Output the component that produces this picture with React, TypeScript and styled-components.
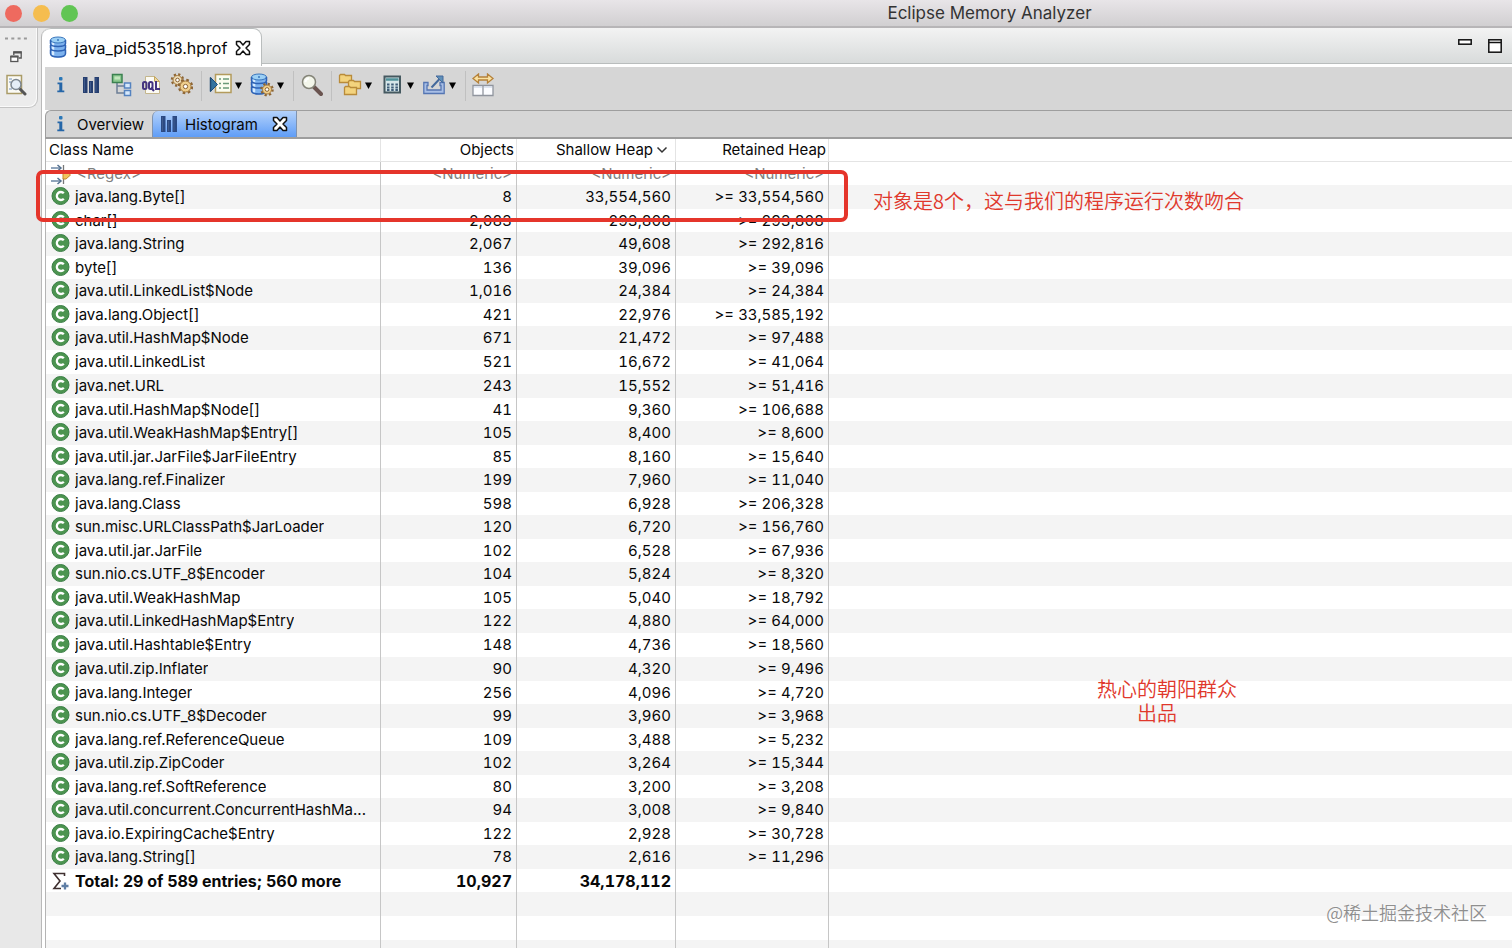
import React from "react";
import styled, { createGlobalStyle } from "styled-components";

const GlobalStyle = createGlobalStyle`
  * { box-sizing: border-box; }
  html, body, #root { height: 100%; margin: 0; }
  body {
    overflow: hidden;
    font-family: Inter, "Noto Sans CJK SC", sans-serif;
    font-size: 15px;
    color: #080808;
    background: #e8e8e8;
  }
  button {
    font: inherit;
    color: inherit;
    background: none;
    border: 0;
    padding: 0;
    margin: 0;
  }
  svg { display: block; flex: none; }
`;

const Window = styled.div`
  display: flex;
  flex-direction: column;
  height: 100vh;
`;

const TitleBar = styled.header`
  display: flex;
  align-items: center;
  height: 28px;
  flex: none;
  padding: 0 5px;
  background: linear-gradient(#e8e5e8, #d1cfd1);
  border-bottom: 2px solid #b7b5b7;
`;

const Lights = styled.div`
  display: flex;
  gap: 11px;
  width: 467px;
  flex: none;
`;

const Light = styled.button<{ $color: string }>`
  width: 17px;
  height: 17px;
  border-radius: 50%;
  background: ${(p) => p.$color};
`;

const Title = styled.h1`
  flex: 1;
  margin: 0;
  text-align: center;
  font-size: 17px;
  line-height: 26px;
  font-weight: 400;
  color: #333;
`;

const Workbench = styled.div`
  display: flex;
  flex: 1;
  min-height: 0;
`;

const SideStrip = styled.aside`
  width: 41px;
  flex: none;
`;

const SideTools = styled.div`
  display: flex;
  flex-direction: column;
  align-items: center;
  gap: 11px;
  width: 38px;
  height: 80px;
  padding: 9px 5px 0 0;
  background: #ececec;
  border: solid #c4c4c4;
  border-width: 0 1px 1px 0;
  border-bottom-right-radius: 9px;
  box-shadow: inset -1px -1px #fafafa;
`;

const Editor = styled.main`
  display: flex;
  flex-direction: column;
  flex: 1;
  min-width: 0;
  padding-left: 3px;
  background: #fff;
  border-left: 1px solid #b9b9b9;
  border-top-left-radius: 9px;
`;

const EditorTabs = styled.div`
  display: flex;
  align-items: flex-start;
  height: 36px;
  flex: none;
  margin-left: -3px;
  border-bottom: 1px solid #b9bdbd;
  background: linear-gradient(#f3f3f3, #d8dbdb);
  border-top-left-radius: 9px;
`;

const EditorTab = styled.div`
  display: flex;
  align-items: center;
  gap: 8px;
  height: 38px;
  width: 220px;
  padding-left: 7px;
  background: #fff;
  border: solid #b9bdbd;
  border-width: 1px 1px 0 0;
  border-radius: 9px 9px 0 0;
`;

const EditorTabName = styled.span`
  flex: none;
  font-size: 16px;
  line-height: 20px;
`;

const WindowButtons = styled.div`
  display: flex;
  align-items: flex-start;
  gap: 16px;
  margin: 11px 10px 0 auto;
`;

const ToolBar = styled.div`
  display: flex;
  align-items: flex-start;
  height: 43px;
  flex: none;
  margin-top: 3px;
  padding: 6px 0 0 1px;
  background: #d6d6d6;
`;

const ToolButton = styled.button<{ $menu?: boolean }>`
  display: flex;
  align-items: center;
  justify-content: center;
  gap: 3px;
  width: ${(p) => (p.$menu ? 42 : 30)}px;
  height: 24px;
  flex: none;
`;

const Separator = styled.span`
  width: 1px;
  height: 30px;
  margin: -2px 2px 0 5px;
  background: #c0c0c0;
`;

const ViewTabs = styled.div`
  display: flex;
  height: 29px;
  flex: none;
  background: #d6d6d6;
  border: solid #9e9e9e;
  border-width: 1px 0 2px 1px;
  border-top-left-radius: 6px;
`;

const ViewTab = styled.button<{ $active?: boolean }>`
  display: flex;
  align-items: center;
  gap: ${(p) => (p.$active ? 7 : 8)}px;
  width: ${(p) => (p.$active ? 145 : 106)}px;
  padding-left: 7px;
  border-radius: 6px 0 0 0;
  ${(p) =>
    p.$active &&
    `background: linear-gradient(#b4d2fb, #5f9df7);
     border: solid #7f93b0;
     border-width: 0 1px;`}
`;

const Sheet = styled.section`
  position: relative;
  flex: 1;
  min-height: 0;
  border-left: 1px solid #b4b4b4;
`;

const Clip = styled.div`
  height: 100%;
  overflow: hidden;
`;

const Table = styled.table`
  width: 100%;
  table-layout: fixed;
  border-collapse: separate;
  border-spacing: 0;
`;

const Col = styled.col<{ $w?: number }>`
  ${(p) => p.$w && `width: ${p.$w}px;`}
`;

const HeadCell = styled.th<{ $num?: boolean }>`
  height: 23px;
  padding: 0 2px 0 3px;
  font-weight: 400;
  line-height: 22px;
  text-align: ${(p) => (p.$num ? "right" : "left")};
  border-bottom: 1px solid #e4e4e4;
  border-right: 1px solid #e4e4e4;
  &:last-child { border-right: 0; }
`;

const SortButton = styled.button`
  display: flex;
  align-items: center;
  gap: 3px;
  margin-left: auto;
  padding-right: 5px;
`;

const Row = styled.tr<{ $bold?: boolean }>`
  height: 23px;
  ${(p) => p.$bold && "font-size: 16px; font-weight: 700;"}
  &:nth-child(even) {
    height: 24px;
    background: #f4f4f4;
  }
  &:nth-child(12n + 9) { height: 24px; }
`;

const Cell = styled.td<{ $num?: boolean }>`
  padding: 0 ${(p) => (p.$num ? 4 : 9)}px 0 5px;
  line-height: 22px;
  white-space: nowrap;
  text-align: ${(p) => (p.$num ? "right" : "left")};
  font-variant-numeric: ${(p) => (p.$num ? "tabular-nums" : "normal")};
  border-right: 1px solid #c6c6c6;
  &:last-child { border-right: 0; }
`;

const NameBox = styled.div`
  display: flex;
  align-items: center;
  gap: 5px;
  height: 22px;
`;

const NameText = styled.span`
  overflow: hidden;
  text-overflow: ellipsis;
`;

const FilterButton = styled.button`
  color: #808080;
`;

const Highlight = styled.div`
  position: absolute;
  top: 31px;
  left: -10px;
  width: 812px;
  height: 52px;
  border: 4px solid #e5352b;
  border-radius: 7px;
`;

const Note = styled.p<{ $x: number; $y: number }>`
  position: absolute;
  left: ${(p) => p.$x}px;
  top: ${(p) => p.$y}px;
  margin: 0;
  font-family: "Noto Sans CJK SC", sans-serif;
  font-size: 20px;
  font-weight: 350;
  line-height: 24px;
  white-space: pre;
  color: #e0382c;
`;

const Watermark = styled.p`
  position: absolute;
  right: 25px;
  bottom: 24px;
  margin: 0;
  font-family: "Noto Sans CJK SC", sans-serif;
  font-size: 18px;
  font-weight: 350;
  line-height: 24px;
  color: #8f8f8f;
  text-shadow: 0 0 2px #fff;
`;

const Svg = ({ w = 24, h = 24, children }: { w?: number; h?: number; children: React.ReactNode }) => (
  <svg width={w} height={h} viewBox={`0 0 ${w} ${h}`} fill="none" aria-hidden="true">
    {children}
  </svg>
);

const InfoIcon = () => (
  <Svg w={16} h={20}>
    <path d="M4.500 7.500h4.800v8h2v1.700h-7v-1.700h2V9.200H4.500z" fill="#2566a8" />
    <rect x="6" y="2" width="3.500" height="3.500" rx="1" fill="#2b78b8" />
  </Svg>
);

const BarsIcon = ({ dark = "#263f70" }: { dark?: string }) => (
  <Svg w={18} h={18}>
    <path d="M1 1h4.500v16H1zM7 5h4v12H7zM12.500 1H17v16h-4.500z" fill={dark} />
    <path d="M2.500 2v14M8.500 6v10M14 2v14" stroke="#3f5a8c" />
  </Svg>
);

const TreeIcon = () => (
  <Svg>
    <path d="M8 9v11h7M8 13h7" stroke="#6d7f96" strokeWidth="1.500" />
    <rect x="3.500" y="1.500" width="9.500" height="8" fill="#8cc98f" stroke="#3b8150" strokeWidth="1.500" />
    <path d="M5.500 3.500h5.500v3H5.500z" fill="#c2e6bd" />
    <rect x="15.500" y="10" width="6" height="5" fill="#d7e9fb" stroke="#5583c0" strokeWidth="1.500" />
    <rect x="15.500" y="17.500" width="6" height="5" fill="#d7e9fb" stroke="#5583c0" strokeWidth="1.500" />
  </Svg>
);

const OqlIcon = () => (
  <Svg>
    <path d="M6.500 3.500h9l5 5v12h-14z" fill="#fbfaf3" stroke="#c4b68c" />
    <path d="M15.500 3.500v5h5z" fill="#ecd9a2" stroke="#c4a75e" />
    <g stroke="#453580" strokeWidth="2">
      <rect x="4" y="9" width="3.500" height="7" rx="1.500" />
      <rect x="10" y="9" width="3.500" height="7" rx="1.500" />
      <path d="M12 14.500l3 3.500M17 8v8h4" />
    </g>
  </Svg>
);

const Gear = ({ x, y, r, hollow }: { x: number; y: number; r: number; hollow?: boolean }) => (
  <g>
    <circle cx={x} cy={y} r={r} stroke="#8d6534" strokeWidth="2.500" strokeDasharray={`${(r * Math.PI) / 8} ${(r * Math.PI) / 8}`} />
    <circle cx={x} cy={y} r={r - 1} fill={hollow ? "#ecdcb8" : "#efcf8d"} stroke="#a67a3c" />
    <circle cx={x} cy={y} r={r / 3} fill="#fff" stroke="#8d6534" />
  </g>
);

const GearsIcon = () => (
  <Svg>
    <Gear x={8.5} y={7} r={5.5} hollow />
    <Gear x={16.5} y={13.5} r={6.5} />
  </Svg>
);

const RunReportIcon = () => (
  <Svg>
    <rect x="7.500" y="1.500" width="15.500" height="18" fill="#fbfdf0" stroke="#b39b5c" strokeWidth="1.500" />
    <path d="M11 6h2M15 6h6M11 10.500h2M15 10.500h6M11 15h2M15 15h6" stroke="#6b9a78" strokeWidth="1.500" />
    <path d="M2.500 4.500v14l7-7z" fill="#33749e" stroke="#1d4f7c" />
    <path d="M2.500 4.500v14" stroke="#1f4a70" strokeWidth="1.500" />
  </Svg>
);

const Drums = () => (
  <>
    <path d="M1.500 4v14c0 2 3 3.500 7.500 3.500s7.500-1.500 7.500-3.500V4z" fill="#7db2ee" />
    <path d="M4 6v13.500" stroke="#d6ebff" strokeWidth="2.500" />
    <ellipse cx="9" cy="4" rx="7.500" ry="3" fill="#9cd0f5" stroke="#3a76bd" />
    <path
      d="M1.500 4v3.500c0 2 3 3 7.500 3s7.500-1 7.500-3V4M1.500 9v3c0 2 3 3 7.500 3s7.500-1 7.500-3V9M1.500 13.500v4c0 2 3 3.500 7.500 3.500s7.500-1.500 7.500-3.500v-4"
      stroke="#2e62b5"
      strokeWidth="1.500"
    />
    <circle cx="9" cy="4" r="1" fill="#3a76bd" />
  </>
);

const DatabaseIcon = () => (
  <Svg w={18} h={23}>
    <Drums />
  </Svg>
);

const DatabaseGearIcon = () => (
  <Svg>
    <Drums />
    <Gear x={17} y={16.500} r={5.5} />
  </Svg>
);

const SearchIcon = () => (
  <Svg>
    <path d="M15 14l7 7" stroke="#6a5450" strokeWidth="4" strokeLinecap="round" />
    <circle cx="10" cy="9" r="6.500" fill="#f3f6ea" stroke="#848478" strokeWidth="1.500" />
    <path d="M6.500 9A3.500 3.500 0 0 1 10 5.500" stroke="#fff" strokeWidth="2" />
  </Svg>
);

const FolderShape = ({ x, y }: { x: number; y: number }) => (
  <path
    transform={`translate(${x} ${y})`}
    d="M.5 1.500V8.500h12v-7H6.500l-1-1h-4z"
    fill="#f3d37e"
    stroke="#b98b3a"
    strokeWidth="1.300"
  />
);

const FoldersIcon = () => (
  <Svg>
    <FolderShape x={1} y={1} />
    <FolderShape x={10} y={7} />
    <FolderShape x={6} y={13} />
  </Svg>
);

const CalculatorIcon = () => (
  <Svg>
    <rect x="4.500" y="3.500" width="15.500" height="16" fill="#d5e6e9" stroke="#455960" strokeWidth="2" />
    <path d="M6 6.500h12.500" stroke="#4f9098" strokeWidth="2.500" />
    <path d="M7 11.500h11M7 14.500h11M7 17h11" stroke="#3e5c78" strokeWidth="1.800" strokeDasharray="2.500 1.700" />
  </Svg>
);

const ExportIcon = () => (
  <Svg>
    <path d="M6 9.500H1.800v11h20.400v-11H18v3h1v4.500H5v-4.500h1z" fill="#a9bfe6" stroke="#5576b3" strokeWidth="1.300" />
    <path d="M9.500 14.500L18 5.500" stroke="#44699c" strokeWidth="2" />
    <path d="M14 3h7v7z" fill="#5f90b8" stroke="#44699c" />
  </Svg>
);

const CompareIcon = () => (
  <Svg>
    <path d="M2 5.500L7.500 1v3h9V1L22 5.500 16.500 10V7h-9v3z" fill="#fbe2a0" stroke="#b5813a" strokeWidth="1.300" />
    <path d="M2 12.500h20v10H2zM12 12.500v10" fill="#fbfcff" stroke="#90959e" strokeWidth="1.300" />
    <path d="M3 14h8M13 14h8" stroke="#d5ddeb" strokeWidth="1.500" />
  </Svg>
);

const DropArrow = () => (
  <Svg w={7} h={7}>
    <path d="M0 .5h7L3.500 7z" fill="#000" />
  </Svg>
);

const CloseIcon = () => (
  <Svg w={16} h={16}>
    <path
      d="M1.500 1.500h3.500l3 3.500 3-3.500h3.500v3l-3.500 3.500 3.500 3.500v3H11l-3-3.500-3 3.500H1.500v-3L5 8 1.500 4.500z"
      fill="#fff"
      stroke="#111"
      strokeWidth="1.500"
      strokeLinejoin="round"
    />
  </Svg>
);

const GripIcon = () => (
  <Svg w={22} h={3}>
    <path d="M0 1.500h22" stroke="#9a9a9a" strokeWidth="2" strokeDasharray="3 3.300" />
  </Svg>
);

const RestoreIcon = () => (
  <Svg w={12} h={12}>
    <path d="M3.800 4V1h7.400v6H8.500" stroke="#555" strokeWidth="1.300" />
    <path d="M3.500 1.500h8" stroke="#555" strokeWidth="2" />
    <rect x=".8" y="5.500" width="7" height="5" fill="#fff" stroke="#555" strokeWidth="1.300" />
    <path d="M.5 5.500h8" stroke="#555" strokeWidth="2" />
  </Svg>
);

const InspectIcon = () => (
  <Svg w={22} h={22}>
    <path d="M2 1.500h14.500v18H2z" fill="#fafaf4" stroke="#aa9c68" strokeWidth="1.500" />
    <path d="M4 5h3M4 8h2M4 15h3" stroke="#9fb4cf" strokeWidth="1.500" />
    <path d="M15 15l5 5" stroke="#555" strokeWidth="3" strokeLinecap="round" />
    <circle cx="11" cy="10.500" r="5" fill="#e4edf7" stroke="#7d8791" strokeWidth="1.500" />
  </Svg>
);

const MinimizeIcon = () => (
  <Svg w={14} h={6}>
    <rect x=".8" y=".8" width="12.400" height="4.400" fill="#fff" stroke="#111" strokeWidth="1.500" />
  </Svg>
);

const MaximizeIcon = () => (
  <Svg w={14} h={14}>
    <rect x=".8" y=".8" width="12.400" height="12.400" fill="#fff" stroke="#111" strokeWidth="1.500" />
    <path d="M1 3.500h12" stroke="#111" strokeWidth="1.500" />
  </Svg>
);

const ClassIcon = () => (
  <Svg w={19} h={20}>
    <circle cx="9.500" cy="9" r="8.500" fill="#4c9450" stroke="#3b7f46" />
    <path d="M12.800 6.300A4 4 0 1 0 12.800 11.700" stroke="#fff" strokeWidth="2.300" />
  </Svg>
);

const FilterIcon = () => (
  <Svg w={21} h={22}>
    <path d="M0 5h9M0 18h9" stroke="#6c87a5" strokeWidth="1.500" />
    <path d="M6.500 2l3.500 3-3.500 3M6.500 15l3.500 3-3.500 3" stroke="#54708f" strokeWidth="1.500" />
    <path d="M12.500 2v7M12.500 15v6" stroke="#777" strokeWidth="1.300" />
    <path d="M12 8h3l4.500 4-4.500 4h-3z" fill="#f2c35a" stroke="#c48a2c" />
  </Svg>
);

const SumIcon = () => (
  <Svg w={19} h={20}>
    <path d="M13.500 5V2.500H3l6 7.500-6 7.500h7" stroke="#3f3030" strokeWidth="1.600" />
    <path d="M14 11.500v7M10.500 15h7" stroke="#5f7ea5" strokeWidth="2.300" />
  </Svg>
);

const SortChevron = () => (
  <Svg w={12} h={8}>
    <path d="M1.500 1.500L6 6l4.500-4.500" stroke="#333" strokeWidth="1.500" />
  </Svg>
);

const rows: [string, string, string, string][] = [
  ["java.lang.Byte[]", "8", "33,554,560", "33,554,560"],
  ["char[]", "2,083", "293,808", "293,808"],
  ["java.lang.String", "2,067", "49,608", "292,816"],
  ["byte[]", "136", "39,096", "39,096"],
  ["java.util.LinkedList$Node", "1,016", "24,384", "24,384"],
  ["java.lang.Object[]", "421", "22,976", "33,585,192"],
  ["java.util.HashMap$Node", "671", "21,472", "97,488"],
  ["java.util.LinkedList", "521", "16,672", "41,064"],
  ["java.net.URL", "243", "15,552", "51,416"],
  ["java.util.HashMap$Node[]", "41", "9,360", "106,688"],
  ["java.util.WeakHashMap$Entry[]", "105", "8,400", "8,600"],
  ["java.util.jar.JarFile$JarFileEntry", "85", "8,160", "15,640"],
  ["java.lang.ref.Finalizer", "199", "7,960", "11,040"],
  ["java.lang.Class", "598", "6,928", "206,328"],
  ["sun.misc.URLClassPath$JarLoader", "120", "6,720", "156,760"],
  ["java.util.jar.JarFile", "102", "6,528", "67,936"],
  ["sun.nio.cs.UTF_8$Encoder", "104", "5,824", "8,320"],
  ["java.util.WeakHashMap", "105", "5,040", "18,792"],
  ["java.util.LinkedHashMap$Entry", "122", "4,880", "64,000"],
  ["java.util.Hashtable$Entry", "148", "4,736", "18,560"],
  ["java.util.zip.Inflater", "90", "4,320", "9,496"],
  ["java.lang.Integer", "256", "4,096", "4,720"],
  ["sun.nio.cs.UTF_8$Decoder", "99", "3,960", "3,968"],
  ["java.lang.ref.ReferenceQueue", "109", "3,488", "5,232"],
  ["java.util.zip.ZipCoder", "102", "3,264", "15,344"],
  ["java.lang.ref.SoftReference", "80", "3,200", "3,208"],
  ["java.util.concurrent.ConcurrentHashMa...", "94", "3,008", "9,840"],
  ["java.io.ExpiringCache$Entry", "122", "2,928", "30,728"],
  ["java.lang.String[]", "78", "2,616", "11,296"],
];

const emptyRows = [0, 1, 2];

export default function App() {
  return (
    <Window>
      <GlobalStyle />
      <TitleBar>
        <Lights>
          <Light $color="#ee6a5f" aria-label="Close window" />
          <Light $color="#f5bd4f" aria-label="Minimize window" />
          <Light $color="#61c554" aria-label="Zoom window" />
        </Lights>
        <Title>Eclipse Memory Analyzer</Title>
      </TitleBar>
      <Workbench>
        <SideStrip>
          <SideTools>
            <GripIcon />
            <button aria-label="Restore"><RestoreIcon /></button>
            <button aria-label="Inspector"><InspectIcon /></button>
          </SideTools>
        </SideStrip>
        <Editor>
          <EditorTabs>
            <EditorTab>
              <DatabaseIcon />
              <EditorTabName>java_pid53518.hprof</EditorTabName>
              <button aria-label="Close file"><CloseIcon /></button>
            </EditorTab>
            <WindowButtons>
              <button aria-label="Minimize"><MinimizeIcon /></button>
              <button aria-label="Maximize"><MaximizeIcon /></button>
            </WindowButtons>
          </EditorTabs>
          <ToolBar role="toolbar">
            <ToolButton aria-label="Overview"><InfoIcon /></ToolButton>
            <ToolButton aria-label="Histogram"><BarsIcon /></ToolButton>
            <ToolButton aria-label="Dominator tree"><TreeIcon /></ToolButton>
            <ToolButton aria-label="Object query"><OqlIcon /></ToolButton>
            <ToolButton aria-label="Thread overview"><GearsIcon /></ToolButton>
            <Separator />
            <ToolButton $menu aria-label="Run report"><RunReportIcon /><DropArrow /></ToolButton>
            <ToolButton $menu aria-label="Query browser"><DatabaseGearIcon /><DropArrow /></ToolButton>
            <Separator />
            <ToolButton aria-label="Find object"><SearchIcon /></ToolButton>
            <Separator />
            <ToolButton $menu aria-label="Group result"><FoldersIcon /><DropArrow /></ToolButton>
            <ToolButton $menu aria-label="Calculate retained size"><CalculatorIcon /><DropArrow /></ToolButton>
            <ToolButton $menu aria-label="Export"><ExportIcon /><DropArrow /></ToolButton>
            <Separator />
            <ToolButton aria-label="Compare"><CompareIcon /></ToolButton>
          </ToolBar>
          <ViewTabs>
            <ViewTab><InfoIcon />Overview</ViewTab>
            <ViewTab $active><BarsIcon dark="#2b4983" />Histogram<span /><CloseIcon /></ViewTab>
          </ViewTabs>
          <Sheet>
            <Clip>
              <Table>
                <colgroup>
                  <Col $w={335} />
                  <Col $w={136} />
                  <Col $w={159} />
                  <Col $w={153} />
                  <Col />
                </colgroup>
                <thead>
                  <tr>
                    <HeadCell>Class Name</HeadCell>
                    <HeadCell $num>Objects</HeadCell>
                    <HeadCell $num><SortButton>Shallow Heap<SortChevron /></SortButton></HeadCell>
                    <HeadCell $num>Retained Heap</HeadCell>
                    <HeadCell />
                  </tr>
                </thead>
                <tbody>
                  <Row>
                    <Cell>
                      <NameBox><FilterIcon /><FilterButton>&lt;Regex&gt;</FilterButton></NameBox>
                    </Cell>
                    <Cell $num><FilterButton>&lt;Numeric&gt;</FilterButton></Cell>
                    <Cell $num><FilterButton>&lt;Numeric&gt;</FilterButton></Cell>
                    <Cell $num><FilterButton>&lt;Numeric&gt;</FilterButton></Cell>
                    <Cell />
                  </Row>
                  {rows.map(([name, objects, shallow, retained]) => (
                    <Row key={name}>
                      <Cell><NameBox><ClassIcon /><NameText>{name}</NameText></NameBox></Cell>
                      <Cell $num>{objects}</Cell>
                      <Cell $num>{shallow}</Cell>
                      <Cell $num>&gt;= {retained}</Cell>
                      <Cell />
                    </Row>
                  ))}
                  <Row $bold>
                    <Cell><NameBox><SumIcon /><NameText>Total: 29 of 589 entries; 560 more</NameText></NameBox></Cell>
                    <Cell $num>10,927</Cell>
                    <Cell $num>34,178,112</Cell>
                    <Cell $num />
                    <Cell />
                  </Row>
                  {emptyRows.map((n) => (
                    <Row key={n}>
                      <Cell /><Cell /><Cell /><Cell /><Cell />
                    </Row>
                  ))}
                </tbody>
              </Table>
            </Clip>
            <Highlight />
            <Note $x={827} $y={50}>对象是8个，这与我们的程序运行次数吻合</Note>
            <Note $x={1051} $y={538}>{"热心的朝阳群众\n\u3000\u3000出品"}</Note>
            <Watermark>@稀土掘金技术社区</Watermark>
          </Sheet>
        </Editor>
      </Workbench>
    </Window>
  );
}
